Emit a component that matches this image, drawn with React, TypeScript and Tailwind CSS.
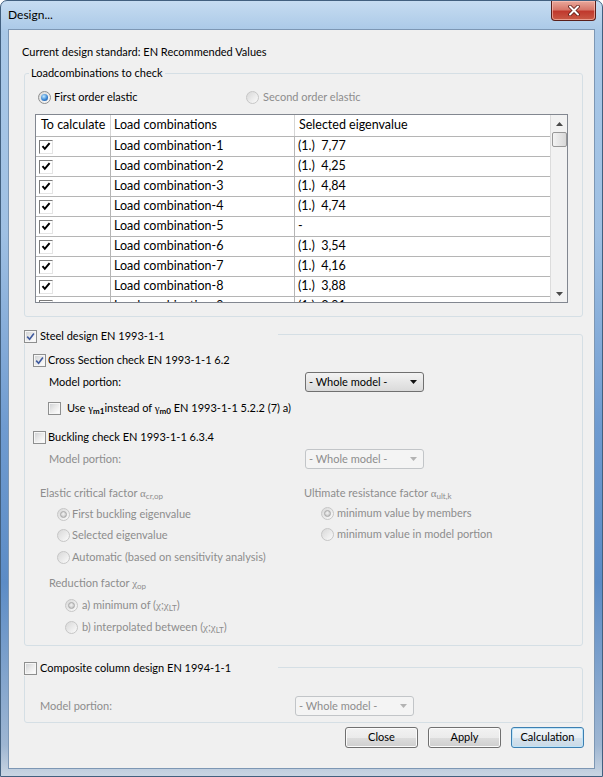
import React from 'react';

const rows = [
  { name: 'Load combination-1', value: '(1.)  7,77' },
  { name: 'Load combination-2', value: '(1.)  4,25' },
  { name: 'Load combination-3', value: '(1.)  4,84' },
  { name: 'Load combination-4', value: '(1.)  4,74' },
  { name: 'Load combination-5', value: '-' },
  { name: 'Load combination-6', value: '(1.)  3,54' },
  { name: 'Load combination-7', value: '(1.)  4,16' },
  { name: 'Load combination-8', value: '(1.)  3,88' },
  { name: 'Load combination-9', value: '(1.)  3,91' }
];

const greek = "font-['Liberation_Serif',serif]";

const CheckBox = ({ checked = false, disabled = false }: { checked?: boolean; disabled?: boolean }) => (
  <span
    className={`relative flex h-[13px] w-[13px] shrink-0 items-center justify-center border ${
      disabled ? 'border-[#bcbcbc]' : 'border-[#8e8f8f]'
    } bg-[#f6f6f6]`}
  >
    <span className="absolute inset-[1px] bg-gradient-to-br from-[#d2d4d6] via-[#ebebeb] to-[#fdfdfd]" />
    {checked && (
      <svg width="9" height="9" viewBox="0 0 9 9" className="relative">
        <path d="M1.2 4.6 L3.6 7.2 L7.9 1.4" fill="none" stroke="#3f5a9e" strokeWidth="1.6" />
      </svg>
    )}
  </span>
);

const RadioBtn = ({ checked = false, disabled = false }: { checked?: boolean; disabled?: boolean }) => (
  <span
    className={`flex h-[13px] w-[13px] shrink-0 items-center justify-center rounded-full border ${
      disabled ? 'border-[#c6c6c6]' : 'border-[#8e8f8f]'
    } bg-gradient-to-br from-[#d8d8d8] to-[#fbfbfb]`}
  >
    {checked && (
      <span
        className={`h-[7px] w-[7px] rounded-full ${
          disabled
            ? 'border border-[#a9a9a9] bg-[radial-gradient(circle_at_45%_40%,#f4f4f4_0%,#d0d0d0_60%,#a8a8a8_100%)]'
            : 'bg-[radial-gradient(circle_at_40%_35%,#c4ebff_0%,#3a86d4_55%,#17468a_100%)]'
        }`}
      />
    )}
  </span>
);

const Combo = ({ disabled = false }: { disabled?: boolean }) => (
  <div
    className={`flex h-[20px] w-[119px] items-center justify-between rounded-[3px] border pl-[3px] pr-[6px] ${
      disabled
        ? 'border-[#c2c5c8] bg-[#f4f4f4] text-[#8d8d8d]'
        : 'border-[#707070] bg-gradient-to-b from-[#f3f3f3] to-[#dadada] text-black'
    }`}
  >
    <span>- Whole model -</span>
    <svg width="7" height="4" viewBox="0 0 7 4">
      <path d="M0 0 H7 L3.5 4 Z" fill={disabled ? '#b3b3b3' : '#111'} />
    </svg>
  </div>
);

const Button = ({ label, primary = false }: { label: string; primary?: boolean }) => (
  <button
    className={`h-[21px] w-[73px] rounded-[3px] border text-black ${
      primary
        ? 'border-[#3c7fb1] bg-[linear-gradient(#f2f6f9_0%,#e6eef4_50%,#d6e3ed_51%,#c9d9e6_100%)] shadow-[inset_0_0_0_1px_#bfe4f8]'
        : 'border-[#707070] bg-[linear-gradient(#f2f2f2_0%,#ebebeb_50%,#dddddd_51%,#cfcfcf_100%)] shadow-[inset_0_0_0_1px_#fbfbfb]'
    }`}
  >
    {label}
  </button>
);

const TableCheck = () => (
  <span className="flex h-[14px] w-[14px] items-center justify-center border border-t-[#7a7a7a] border-l-[#7a7a7a] border-r-[#e4e4e4] border-b-[#e4e4e4] bg-white">
    <svg width="10" height="9" viewBox="0 0 10 9">
      <path d="M1.5 4.2 L3.8 6.8 L8.6 1.2" fill="none" stroke="#000" strokeWidth="2" />
    </svg>
  </span>
);

const ScrollBar = () => (
  <div className="flex w-[17px] flex-col items-center border-l border-[#dcdcdc] bg-[#f2f2f2]">
    <div className="flex h-[17px] items-center justify-center">
      <svg width="7" height="4" viewBox="0 0 7 4">
        <path d="M0 4 H7 L3.5 0 Z" fill="#4a4a4a" />
      </svg>
    </div>
    <div className="h-[15px] w-[15px] rounded-[2px] border border-[#979797] bg-gradient-to-r from-[#f3f3f3] to-[#d8d8d8]" />
    <div className="flex-1" />
    <div className="flex h-[17px] items-center justify-center">
      <svg width="7" height="4" viewBox="0 0 7 4">
        <path d="M0 0 H7 L3.5 4 Z" fill="#4a4a4a" />
      </svg>
    </div>
  </div>
);

const LoadTable = () => (
  <div className="ml-[10px] mt-[9px] flex h-[189px] w-[533px] border border-[#828790] bg-white text-[12.5px]">
    <div className="flex-1 overflow-hidden">
      <div className="grid h-[22px] grid-cols-[75px_184px_1fr] border-b border-[#b5b5b5]">
        <div className="flex items-center border-r border-[#d5d5d5] pl-[5px]">To calculate</div>
        <div className="flex items-center border-r border-[#d5d5d5] pl-[3px]">Load combinations</div>
        <div className="flex items-center pl-[4px]">Selected eigenvalue</div>
      </div>
      {rows.map((r) => (
        <div key={r.name} className="grid h-[20px] grid-cols-[75px_184px_1fr] border-b border-[#b5b5b5]">
          <div className="flex items-center border-r border-[#b5b5b5] pl-[3px]">
            <TableCheck />
          </div>
          <div className="flex items-center border-r border-[#b5b5b5] pl-[3px]">{r.name}</div>
          <div className="flex items-center whitespace-pre pl-[3px]">{r.value}</div>
        </div>
      ))}
    </div>
    <ScrollBar />
  </div>
);

export default function App() {
  return (
    <div className="relative h-[777px] w-[603px] overflow-hidden rounded-t-[7px] border border-[#42607f] bg-[linear-gradient(180deg,#c6dcf1_0%,#a9c8e7_4%,#9fc0e3_30%,#6f9bd0_55%,#5c8cc6_75%,#9eb6d2_96%,#c9d5e2_100%)] font-['Lato',sans-serif] text-[11px] text-black">
      <div className="flex h-[28px] items-start justify-between">
        <div className="pl-[7px] pt-[5px] text-[12px]">Design...</div>
        <div className="mr-[6px] flex h-[20px] w-[45px] items-center justify-center rounded-b-[4px] border border-t-0 border-[#5a1f1a] bg-[linear-gradient(180deg,#e9a89b_0%,#d7786b_45%,#c0392d_55%,#c95a46_100%)] shadow-[inset_0_0_0_1px_rgba(255,200,190,0.6)]">
          <svg width="12" height="11" viewBox="0 0 12 11">
            <path d="M2 1.5 L10 9.5 M10 1.5 L2 9.5" stroke="#5b1a14" strokeWidth="3.6" strokeLinecap="round" />
            <path d="M2 1.5 L10 9.5 M10 1.5 L2 9.5" stroke="#ffffff" strokeWidth="2" strokeLinecap="round" />
          </svg>
        </div>
      </div>

      <div className="mx-[7px] flex h-[740px] flex-col border border-[#7d97b4] bg-[#f0f0f0]">
        <div className="ml-[13px] mt-[14px] flex h-[16px] items-center">
          Current design standard: EN Recommended Values
        </div>

        <div className="ml-[15px] mt-[13px] h-[244px] w-[559px] rounded-[3px] border border-[#d5dfe5]">
          <div className="-mt-[8px] ml-[4px] h-[14px] w-fit bg-[#f0f0f0] px-[2px] leading-[14px]">
            Loadcombinations to check
          </div>
          <div className="mt-[9px] flex h-[16px] items-center pl-[13px]">
            <div className="flex w-[208px] items-center gap-[3px]">
              <RadioBtn checked />
              <span>First order elastic</span>
            </div>
            <div className="flex items-center gap-[4px] text-[#8d8d8d]">
              <RadioBtn disabled />
              <span>Second order elastic</span>
            </div>
          </div>
          <LoadTable />
        </div>

        <div className="ml-[15px] mt-[17px] h-[312px] w-[559px] rounded-[3px] border border-[#d5dfe5]">
          <div className="-ml-px -mt-[7px] flex h-[16px] w-[254px] items-center gap-[3px] bg-[#f0f0f0]">
            <CheckBox checked />
            <span>Steel design EN 1993-1-1</span>
          </div>
          <div className="ml-[8px] mt-[8px] flex h-[16px] items-center gap-[2px]">
            <CheckBox checked />
            <span>Cross Section check EN 1993-1-1 6.2</span>
          </div>
          <div className="mt-[4px] flex h-[20px] items-center pl-[24px]">
            <span className="w-[256px]">Model portion:</span>
            <Combo />
          </div>
          <div className="ml-[23px] mt-[8px] flex h-[16px] items-center gap-[6px]">
            <CheckBox />
            <span>
              Use <span className={greek}>γ</span>
              <sub className="text-[8px] font-bold">m1</sub>instead of <span className={greek}>γ</span>
              <sub className="text-[8px] font-bold">m0</sub> EN 1993-1-1 5.2.2 (7) a)
            </span>
          </div>
          <div className="ml-[8px] mt-[13px] flex h-[16px] items-center gap-[2px]">
            <CheckBox />
            <span>Buckling check EN 1993-1-1 6.3.4</span>
          </div>
          <div className="mt-[4px] flex h-[20px] items-center pl-[24px] text-[#8d8d8d]">
            <span className="w-[256px]">Model portion:</span>
            <Combo disabled />
          </div>

          <div className="mt-[16px] grid grid-cols-[264px_1fr] pl-[15px] text-[#8d8d8d]">
            <div className="flex flex-col">
              <div className="flex h-[16px] items-center">
                <span>
                  Elastic critical factor <span className={greek}>α</span>
                  <sub className="text-[8px]">cr,op</sub>
                </span>
              </div>
              <div className="mt-[5px] flex h-[16px] items-center gap-[2px] pl-[17px]">
                <RadioBtn checked disabled />
                <span>First buckling eigenvalue</span>
              </div>
              <div className="mt-[5px] flex h-[16px] items-center gap-[2px] pl-[17px]">
                <RadioBtn disabled />
                <span>Selected eigenvalue</span>
              </div>
              <div className="mt-[6px] flex h-[16px] items-center gap-[2px] pl-[17px]">
                <RadioBtn disabled />
                <span>Automatic (based on sensitivity analysis)</span>
              </div>
              <div className="mt-[10px] flex h-[16px] items-center pl-[9px]">
                <span>
                  Reduction factor <span className={greek}>χ</span>
                  <sub className="text-[8px]">op</sub>
                </span>
              </div>
              <div className="mt-[6px] flex h-[16px] items-center gap-[4px] pl-[25px]">
                <RadioBtn checked disabled />
                <span>
                  a) minimum of (<span className={greek}>χ</span>;<span className={greek}>χ</span>
                  <sub className="text-[8px]">LT</sub>)
                </span>
              </div>
              <div className="mt-[6px] flex h-[16px] items-center gap-[4px] pl-[25px]">
                <RadioBtn disabled />
                <span>
                  b) interpolated between (<span className={greek}>χ</span>;<span className={greek}>χ</span>
                  <sub className="text-[8px]">LT</sub>)
                </span>
              </div>
            </div>
            <div className="flex flex-col">
              <div className="flex h-[16px] items-center">
                <span>
                  Ultimate resistance factor <span className={greek}>α</span>
                  <sub className="text-[8px]">ult,k</sub>
                </span>
              </div>
              <div className="mt-[4px] flex h-[16px] items-center gap-[3px] pl-[17px]">
                <RadioBtn checked disabled />
                <span>minimum value by members</span>
              </div>
              <div className="mt-[5px] flex h-[16px] items-center gap-[3px] pl-[17px]">
                <RadioBtn disabled />
                <span>minimum value in model portion</span>
              </div>
            </div>
          </div>
        </div>

        <div className="ml-[15px] mt-[21px] h-[56px] w-[559px] rounded-[3px] border border-[#d5dfe5]">
          <div className="-ml-px -mt-[8px] flex h-[16px] w-[254px] items-center gap-[3px] bg-[#f0f0f0]">
            <CheckBox />
            <span>Composite column design EN 1994-1-1</span>
          </div>
          <div className="mt-[20px] flex h-[20px] items-center pl-[15px] text-[#8d8d8d]">
            <span className="w-[255px]">Model portion:</span>
            <Combo disabled />
          </div>
        </div>

        <div className="mt-[4px] flex justify-end gap-[10px] pr-[10px]">
          <Button label="Close" />
          <Button label="Apply" />
          <Button label="Calculation" primary />
        </div>
      </div>
    </div>
  );
}
